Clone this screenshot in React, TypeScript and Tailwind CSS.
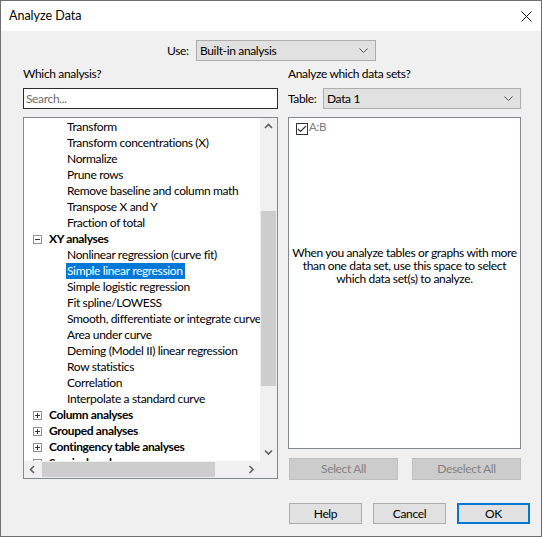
import React from "react";

type Row = { label: string; group?: boolean; open?: boolean; selected?: boolean };

const rows: Row[] = [
  { label: "Transform" },
  { label: "Transform concentrations (X)" },
  { label: "Normalize" },
  { label: "Prune rows" },
  { label: "Remove baseline and column math" },
  { label: "Transpose X and Y" },
  { label: "Fraction of total" },
  { label: "XY analyses", group: true, open: true },
  { label: "Nonlinear regression (curve fit)" },
  { label: "Simple linear regression", selected: true },
  { label: "Simple logistic regression" },
  { label: "Fit spline/LOWESS" },
  { label: "Smooth, differentiate or integrate curve" },
  { label: "Area under curve" },
  { label: "Deming (Model II) linear regression" },
  { label: "Row statistics" },
  { label: "Correlation" },
  { label: "Interpolate a standard curve" },
  { label: "Column analyses", group: true },
  { label: "Grouped analyses", group: true },
  { label: "Contingency table analyses", group: true },
  { label: "Survival analyses", group: true },
  { label: "Parts of whole", group: true },
];

function Chevron({ dir }: { dir: "up" | "down" | "left" | "right" }) {
  const pts = {
    up: "1,5 4.5,1.5 8,5",
    down: "1,1.5 4.5,5 8,1.5",
    left: "5,1 1.5,4.5 5,8",
    right: "1.5,1 5,4.5 1.5,8",
  }[dir];
  const vert = dir === "up" || dir === "down";
  return (
    <svg width={vert ? 9 : 7} height={vert ? 7 : 9} viewBox={vert ? "0 0 9 7" : "0 0 7 9"}>
      <polyline points={pts} fill="none" stroke="#606060" strokeWidth="1.6" />
    </svg>
  );
}

function Combo({ value, className }: { value: string; className: string }) {
  return (
    <div
      className={`h-[21px] bg-[#e1e1e1] border border-[#adadad] flex items-center justify-between pl-[3px] pr-[7px] ${className}`}
    >
      <span>{value}</span>
      <svg width="9" height="5" viewBox="0 0 9 5">
        <polyline points="0.5,0.5 4.5,4.5 8.5,0.5" fill="none" stroke="#505050" strokeWidth="1" />
      </svg>
    </div>
  );
}

function Expander({ open }: { open?: boolean }) {
  return (
    <div className="w-[9px] h-[9px] border border-[#919191] bg-white relative shrink-0">
      <div className="absolute left-[1px] top-[3px] w-[5px] h-[1px] bg-[#333]" />
      {!open && <div className="absolute left-[3px] top-[1px] w-[1px] h-[5px] bg-[#333]" />}
    </div>
  );
}

export default function App() {
  return (
    <div className="w-[542px] h-[537px] bg-[#f0f0f0] border border-[#6e6e6e] flex flex-col text-[12px] tracking-[-0.35px] text-black font-['Lato',sans-serif] overflow-hidden">
      <div className="h-[30px] shrink-0 bg-white flex items-center justify-between pl-[8px] pr-[9px]">
        <span className="text-[12.5px] tracking-normal">Analyze Data</span>
        <svg width="11" height="11" viewBox="0 0 11 11">
          <path d="M0.5 0.5 L10.5 10.5 M10.5 0.5 L0.5 10.5" stroke="#111" strokeWidth="1" />
        </svg>
      </div>

      <div className="flex items-center ml-[166px] mt-[9px] h-[21px]">
        <span className="w-[29px]">Use:</span>
        <Combo value="Built-in analysis" className="w-[180px]" />
      </div>

      <div className="flex mt-[5px] pl-[22px] gap-[10px]">
        <div className="w-[255px] flex flex-col">
          <div className="h-[16px] leading-[16px]">Which analysis?</div>
          <div className="mt-[6px] h-[21px] bg-white border border-[#2b2b2b] flex items-center pl-[2px] text-[#6d6d6d]">
            Search...
          </div>
          <div className="mt-[8px] h-[362px] bg-white border border-[#828790] flex flex-col">
            <div className="flex flex-1 min-h-0">
              <div className="flex-1 overflow-hidden pt-[1px]">
                {rows.map((r) =>
                  r.group ? (
                    <div key={r.label} className="h-[16px] flex items-center whitespace-nowrap">
                      <div className="ml-[9px] mr-[7px]">
                        <Expander open={r.open} />
                      </div>
                      <span className="font-bold">{r.label}</span>
                    </div>
                  ) : (
                    <div key={r.label} className="h-[16px] flex whitespace-nowrap">
                      <span
                        className={`ml-[42px] pl-[1px] pr-[2px] leading-[16px] ${
                          r.selected ? "bg-[#0078d7] text-white" : ""
                        }`}
                      >
                        {r.label}
                      </span>
                    </div>
                  )
                )}
              </div>
              <div className="w-[17px] bg-[#f0f0f0] flex flex-col shrink-0">
                <div className="h-[17px] flex items-center justify-center">
                  <Chevron dir="up" />
                </div>
                <div className="flex-1 pt-[76px]">
                  <div className="h-[175px] w-[15px] ml-[1px] bg-[#cdcdcd]" />
                </div>
                <div className="h-[17px] flex items-center justify-center">
                  <Chevron dir="down" />
                </div>
              </div>
            </div>
            <div className="h-[17px] flex shrink-0">
              <div className="flex-1 bg-[#f0f0f0] flex items-center">
                <div className="w-[17px] flex justify-center">
                  <Chevron dir="left" />
                </div>
                <div className="flex-1 h-full py-[1px] pl-[1px]">
                  <div className="h-full w-[173px] bg-[#cdcdcd]" />
                </div>
                <div className="w-[17px] flex justify-center">
                  <Chevron dir="right" />
                </div>
              </div>
              <div className="w-[17px] bg-[#f0f0f0]" />
            </div>
          </div>
        </div>

        <div className="w-[233px] flex flex-col">
          <div className="h-[16px] leading-[16px]">Analyze which data sets?</div>
          <div className="mt-[6px] flex items-center justify-between">
            <span>Table:</span>
            <Combo value="Data 1" className="w-[198px]" />
          </div>
          <div className="mt-[8px] h-[332px] bg-white border border-[#828790] flex flex-col">
            <div className="flex items-center pt-[5px] pl-[7px]">
              <div className="w-[12px] h-[12px] border border-[#333] flex items-center justify-center">
                <svg width="10" height="8" viewBox="0 0 10 8">
                  <polyline points="1,4 3.5,6.5 9,1" fill="none" stroke="#333" strokeWidth="1.2" />
                </svg>
              </div>
              <span className="ml-[1px] -mt-[5px] text-[#7a7a7a] text-[11.5px]">A:B</span>
            </div>
            <div className="mt-[111px] text-center leading-[13px] whitespace-nowrap">
              When you analyze tables or graphs with more
              <br />
              than one data set, use this space to select
              <br />
              which data set(s) to analyze.
            </div>
          </div>
          <div className="mt-[9px] flex pl-[1px] gap-[14px]">
            <div className="w-[109px] h-[22px] bg-[#cccccc] border border-[#bfbfbf] text-[#838383] flex items-center justify-center">
              Select All
            </div>
            <div className="w-[109px] h-[22px] bg-[#cccccc] border border-[#bfbfbf] text-[#838383] flex items-center justify-center">
              Deselect All
            </div>
          </div>
        </div>
      </div>

      <div className="mt-[23px] flex justify-end pr-[11px] gap-[11px]">
        <div className="w-[73px] h-[21px] bg-[#e1e1e1] border border-[#adadad] flex items-center justify-center">
          Help
        </div>
        <div className="w-[73px] h-[21px] bg-[#e1e1e1] border border-[#adadad] flex items-center justify-center">
          Cancel
        </div>
        <div className="w-[73px] h-[21px] bg-[#e1e1e1] border-2 border-[#0078d7] flex items-center justify-center">
          OK
        </div>
      </div>
    </div>
  );
}
